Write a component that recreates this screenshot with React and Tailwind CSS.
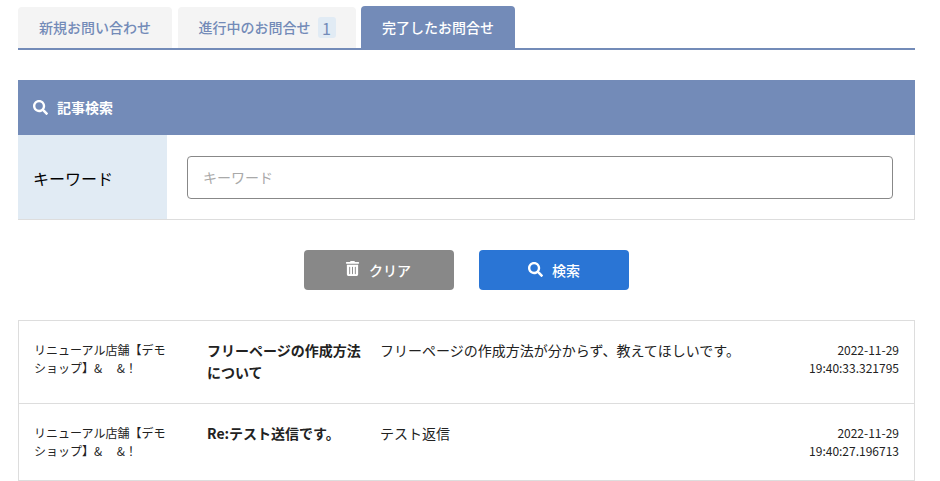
import React from 'react';
import { FaSearch, FaTrashAlt } from 'react-icons/fa';

const rows = [
    {
        shop: 'リニューアル店舗【デモショップ】& \u3000&！',
        title: 'フリーページの作成方法について',
        body: 'フリーページの作成方法が分からず、教えてほしいです。',
        date: '2022-11-29',
        time: '19:40:33.321795',
        height: 'h-[82px]',
    },
    {
        shop: 'リニューアル店舗【デモショップ】& \u3000&！',
        title: 'Re:テスト送信です。',
        body: 'テスト返信',
        date: '2022-11-29',
        time: '19:40:27.196713',
        height: 'h-[77px]',
    },
];

const App = () => {
    return (
        <div className="w-[940px] h-[481px] overflow-hidden bg-white pl-[18px] pr-[25px] pt-[6px] font-['Noto_Sans_CJK_JP','Noto_Sans',sans-serif] text-[#222]">
            {/* Tabs */}
            <div className="flex items-end h-[44px] border-b-2 border-[#738bb8]">
                <div className="w-[154px] h-[41px] flex items-center justify-center bg-[#f4f4f4] rounded-t text-[14px] font-medium text-[#738bb8]">
                    新規お問い合わせ
                </div>
                <div className="w-[178px] h-[41px] ml-[6px] flex items-center justify-center gap-[7px] bg-[#f4f4f4] rounded-t text-[14px] font-medium text-[#738bb8]">
                    <span>進行中のお問合せ</span>
                    <span className="w-[18px] h-[21px] flex items-center justify-center rounded-[3px] bg-[#e1ebf4] text-[16px] font-normal">1</span>
                </div>
                <div className="w-[154px] h-[42px] ml-[5px] flex items-center justify-center bg-[#738bb8] rounded-t text-[14px] font-medium text-white">
                    完了したお問合せ
                </div>
            </div>

            {/* Search panel */}
            <div className="mt-[30px] h-[55px] flex items-center gap-[9px] pl-[15px] bg-[#738bb8] text-white text-[14px] font-bold">
                <FaSearch size={15} />
                <span>記事検索</span>
            </div>
            <div className="flex h-[85px] border-b border-r border-[#dddddd]">
                <div className="w-[149px] flex items-center pl-[15px] pt-[2px] bg-[#e1ebf4] text-[16px] text-black">
                    キーワード
                </div>
                <div className="flex-1 flex items-center pl-[20px] pr-[21px]">
                    <input
                        placeholder="キーワード"
                        className="w-full h-[43px] px-[15px] rounded border border-[#888888] bg-white text-[14px] placeholder:text-[#a9a9a9] outline-none"
                    />
                </div>
            </div>

            {/* Buttons */}
            <div className="mt-[30px] flex justify-center gap-[25px]">
                <button className="w-[150px] h-[40px] flex items-center justify-center gap-[9px] pr-[2px] rounded bg-[#888888] text-white text-[14px] font-medium">
                    <FaTrashAlt size={15} className="-translate-y-[2px]" />
                    <span>クリア</span>
                </button>
                <button className="w-[150px] h-[40px] flex items-center justify-center gap-[9px] rounded bg-[#2a75d5] text-white text-[14px] font-medium">
                    <FaSearch size={15} className="-translate-y-[1px]" />
                    <span>検索</span>
                </button>
            </div>

            {/* Results */}
            <div className="mt-[30px] border border-[#dddddd]">
                {rows.map((row, i) => (
                    <div key={i} className={`flex ${row.height} pl-[15px] pr-[15px] pt-[19px] ${i > 0 ? 'border-t border-[#dddddd]' : ''}`}>
                        <div className="w-[134px] mt-[1px] shrink-0 text-[12px] leading-[18px] text-[#222]">{row.shop}</div>
                        <div className="w-[158px] ml-[39px] -mt-[1px] shrink-0 text-[14px] font-bold leading-[22px] text-[#222]">{row.title}</div>
                        <div className="ml-[15px] -mt-[1px] flex-1 text-[14px] leading-[22px]">{row.body}</div>
                        <div className="mt-[1px] text-right text-[12px] leading-[18px]">
                            <div>{row.date}</div>
                            <div>{row.time}</div>
                        </div>
                    </div>
                ))}
            </div>
        </div>
    );
};

export default App;
